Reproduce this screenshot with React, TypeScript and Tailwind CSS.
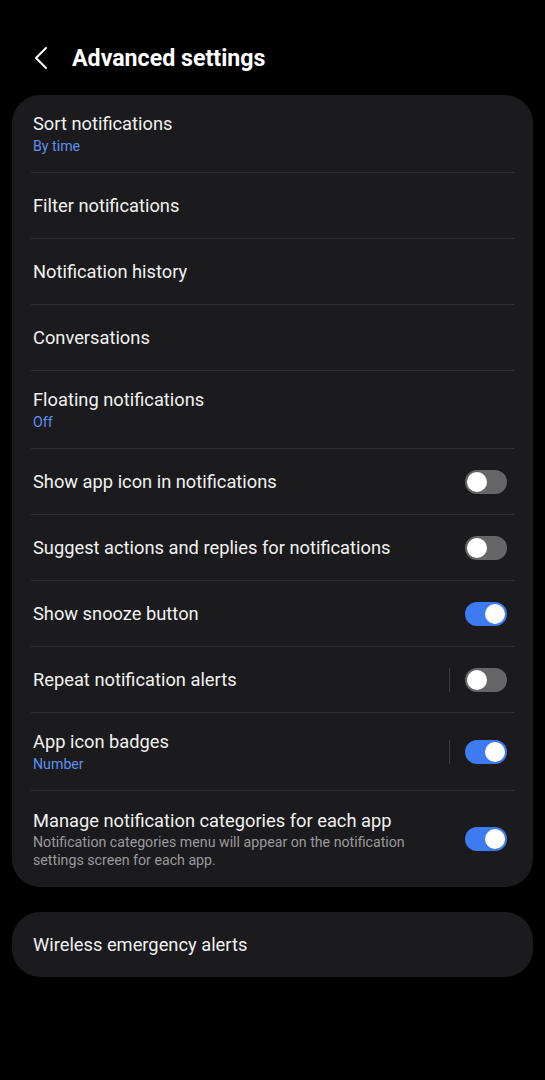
import { ChevronLeft } from "lucide-react";

type Row = {
  title: string;
  sub?: string;
  desc?: string;
  toggle?: boolean;
  on?: boolean;
  split?: boolean;
};

const rows: Row[] = [
  { title: "Sort notifications", sub: "By time" },
  { title: "Filter notifications" },
  { title: "Notification history" },
  { title: "Conversations" },
  { title: "Floating notifications", sub: "Off" },
  { title: "Show app icon in notifications", toggle: true, on: false },
  { title: "Suggest actions and replies for notifications", toggle: true, on: false },
  { title: "Show snooze button", toggle: true, on: true },
  { title: "Repeat notification alerts", toggle: true, on: false, split: true },
  { title: "App icon badges", sub: "Number", toggle: true, on: true, split: true },
  {
    title: "Manage notification categories for each app",
    desc: "Notification categories menu will appear on the notification settings screen for each app.",
    toggle: true,
    on: true,
  },
];

function Toggle({ on }: { on: boolean }) {
  return (
    <div
      className={`flex h-[24px] w-[42px] items-center rounded-full px-[2px] ${
        on ? "justify-end bg-[#3e7bf0]" : "justify-start bg-[#666668]"
      }`}
    >
      <div className="h-[20px] w-[20px] rounded-full bg-white" />
    </div>
  );
}

function SettingRow({ row, last }: { row: Row; last: boolean }) {
  return (
    <div className={last ? "" : "border-b border-[#303032]"}>
      <div
        className={`flex items-center ${
          row.desc ? "h-[96px]" : row.sub ? "h-[77px]" : "h-[65px]"
        }`}
      >
        <div className="flex-1 pl-[2px]">
          <div className="text-[18.3px] leading-[24px] text-[#f1f1f1]">{row.title}</div>
          {row.sub && <div className="text-[14.2px] leading-[20px] text-[#5e8ff0]">{row.sub}</div>}
          {row.desc && (
            <div className="pr-[40px] text-[14.2px] leading-[18px] text-[#9a9a9c]">{row.desc}</div>
          )}
        </div>
        {row.toggle && (
          <div className="flex items-center">
            {row.split && <div className="mr-[15px] h-[24px] w-px bg-[#3a3a3c]" />}
            <div className="mr-[7px]">
              <Toggle on={!!row.on} />
            </div>
          </div>
        )}
      </div>
    </div>
  );
}

export default function App() {
  return (
    <div
      className="min-h-screen bg-black px-[12px] pb-[100px]"
      style={{ fontFamily: "Roboto, 'Noto Sans', sans-serif" }}
    >
      <div className="flex h-[95px] items-center pt-[21px]">
        <ChevronLeft className="ml-[9px] text-white" size={40} strokeWidth={1.2} />
        <h1 className="ml-[11px] text-[23.2px] font-bold text-white">Advanced settings</h1>
      </div>

      <div className="rounded-[28px] bg-[#1b1b1d] px-[19px]">
        {rows.map((r, i) => (
          <SettingRow key={r.title} row={r} last={i === rows.length - 1} />
        ))}
      </div>

      <div className="mt-[25px] flex h-[65px] items-center rounded-[28px] bg-[#1b1b1d] px-[21px]">
        <span className="text-[18.3px] text-[#f1f1f1]">Wireless emergency alerts</span>
      </div>
    </div>
  );
}
